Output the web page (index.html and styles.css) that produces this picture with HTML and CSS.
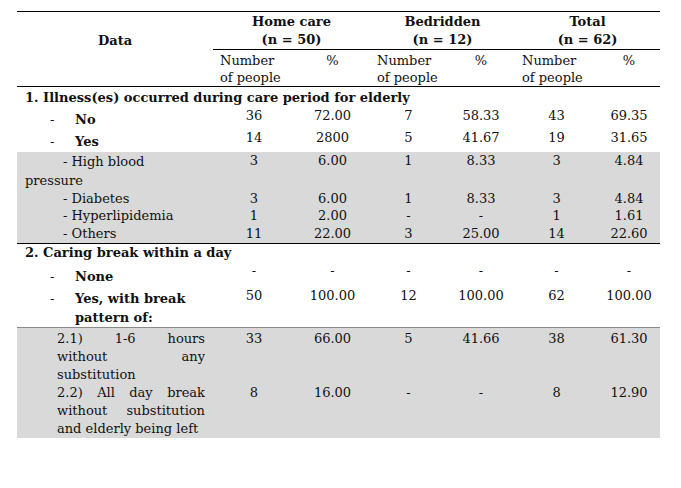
FILE: index.html
```html
<!DOCTYPE html>
<html>
<head>
<meta charset="utf-8">
<link rel="stylesheet" href="styles.css">
</head>
<body>
<div class="page">
<table class="data">
<colgroup>
<col class="c-data"><col class="c-hn"><col class="c-hp"><col class="c-bn"><col class="c-bp"><col class="c-tn"><col class="c-tp">
</colgroup>
<thead>
<tr class="grp">
<th class="h-data">Data</th>
<th colspan="2" class="h-grp">Home care<br>(n = 50)</th>
<th colspan="2" class="h-grp">Bedridden<br>(n = 12)</th>
<th colspan="2" class="h-grp">Total<br>(n = 62)</th>
</tr>
<tr class="sub">
<th class="h-blank"></th>
<th class="h-num">Number<br>of people</th><th class="h-pct">%</th>
<th class="h-num">Number<br>of people</th><th class="h-pct">%</th>
<th class="h-num">Number<br>of people</th><th class="h-pct">%</th>
</tr>
</thead>
<tbody>
<tr class="sec sec1"><td colspan="7">1. Illness(es) occurred during care period for elderly</td></tr>
<tr class="item r-no">
<td class="lbl"><div class="li"><span class="dash">-</span><span class="txt">No</span></div></td>
<td>36</td><td>72.00</td><td>7</td><td>58.33</td><td>43</td><td>69.35</td>
</tr>
<tr class="item r-yes">
<td class="lbl"><div class="li"><span class="dash">-</span><span class="txt">Yes</span></div></td>
<td>14</td><td>2800</td><td>5</td><td>41.67</td><td>19</td><td>31.65</td>
</tr>
<tr class="shade r-hbp">
<td class="sublbl">- High blood pressure</td>
<td>3</td><td>6.00</td><td>1</td><td>8.33</td><td>3</td><td>4.84</td>
</tr>
<tr class="shade r-dia">
<td class="sublbl">- Diabetes</td>
<td>3</td><td>6.00</td><td>1</td><td>8.33</td><td>3</td><td>4.84</td>
</tr>
<tr class="shade r-hyp">
<td class="sublbl">- Hyperlipidemia</td>
<td>1</td><td>2.00</td><td>-</td><td>-</td><td>1</td><td>1.61</td>
</tr>
<tr class="shade r-oth">
<td class="sublbl">- Others</td>
<td>11</td><td>22.00</td><td>3</td><td>25.00</td><td>14</td><td>22.60</td>
</tr>
<tr class="sec sec2"><td colspan="7">2. Caring break within a day</td></tr>
<tr class="item r-none">
<td class="lbl"><div class="li"><span class="dash">-</span><span class="txt">None</span></div></td>
<td>-</td><td>-</td><td>-</td><td>-</td><td>-</td><td>-</td>
</tr>
<tr class="item r-ywb">
<td class="lbl"><div class="li"><span class="dash">-</span><span class="txt">Yes, with break pattern of:</span></div></td>
<td>50</td><td>100.00</td><td>12</td><td>100.00</td><td>62</td><td>100.00</td>
</tr>
<tr class="shade r-21">
<td class="jcell"><span class="jl">2.1) 1-6 hours</span><span class="jl">without any</span><span class="ll">substitution</span></td>
<td>33</td><td>66.00</td><td>5</td><td>41.66</td><td>38</td><td>61.30</td>
</tr>
<tr class="shade r-22">
<td class="jcell"><span class="jl">2.2) All day break</span><span class="jl">without substitution</span><span class="ll">and elderly being left</span></td>
<td>8</td><td>16.00</td><td>-</td><td>-</td><td>8</td><td>12.90</td>
</tr>
</tbody>
</table>
</div>
</body>
</html>
```

FILE: styles.css
```css
html, body {
  margin: 0;
  padding: 0;
  background: #ffffff;
}
body {
  font-family: "DejaVu Serif", "Liberation Serif", serif;
  font-size: 13px;
  color: #111;
}
.page {
  padding: 11px 0 0 17px;
}
.data {
  border-collapse: collapse;
  table-layout: fixed;
  width: 643px;
  border-top: 1px solid #000;
}
.c-data { width: 196px; }
.c-hn { width: 82px; }
.c-hp { width: 75px; }
.c-bn { width: 77px; }
.c-bp { width: 68px; }
.c-tn { width: 83px; }
.c-tp { width: 62px; }

.data th, .data td {
  padding: 0;
  vertical-align: top;
  line-height: 18px;
}
.data td {
  text-align: center;
}

/* header */
.grp { height: 36px; }
.grp th {
  font-weight: bold;
  text-align: center;
  padding-top: 1px;
}
.grp .h-data {
  vertical-align: bottom;
  padding-bottom: 0;
}
.grp .h-grp {
  border-bottom: 1px solid #000;
}
.sub { height: 37px; }
.sub th {
  font-weight: normal;
  padding-top: 2px;
  line-height: 17px;
  border-bottom: 1px solid #000;
}
.sub .h-num {
  text-align: left;
  padding-left: 7px;
}
.sub .h-pct {
  text-align: center;
}

/* section headers */
.data .sec td {
  text-align: left;
  font-weight: bold;
  padding-left: 8px;
}
.sec1 { height: 20px; }
.data .sec1 td { padding-top: 2px; }
.sec2 { height: 18px; }

/* list items */
.data .lbl {
  text-align: left;
}
.li {
  display: flex;
  font-weight: bold;
}
.dash {
  width: 25px;
  padding-left: 33px;
  font-weight: normal;
  flex: none;
}
.txt {
  flex: 1;
}
.r-no { height: 22px; }
.r-yes { height: 23px; }
.data .r-no .lbl, .data .r-yes .lbl { padding-top: 4px; }
.r-none { height: 25px; }
.data .r-none .lbl { padding-top: 6px; }
.r-ywb { height: 40px; }
.data .r-ywb .lbl { padding-top: 2px; line-height: 19px; }

/* shaded rows */
.shade td {
  background: #d9d9d9;
}
.data .sublbl {
  text-align: left;
  padding-left: 8px;
  padding-right: 16px;
  text-indent: 38px;
}
.r-hbp { height: 38px; }
.data .r-hbp .sublbl { line-height: 19px; }
.r-dia, .r-hyp { height: 17px; }
.data .r-dia td, .data .r-hyp td { line-height: 17px; }
.r-oth { height: 19px; }
.data .r-oth td {
  padding-top: 1px;
  border-bottom: 1px solid #000;
}
.data .r-ywb td {
  border-bottom: 1px solid #8a8a8a;
}

.data .jcell {
  text-align: left;
  padding: 0 8px 0 40px;
}
.jl {
  display: block;
  text-align: justify;
  text-align-last: justify;
  height: 18px;
  overflow: hidden;
}
.ll {
  display: block;
  white-space: nowrap;
  height: 18px;
}
.r-21 { height: 56px; }
.data .r-21 td { padding-top: 2px; }
.r-22 { height: 54px; }
```
